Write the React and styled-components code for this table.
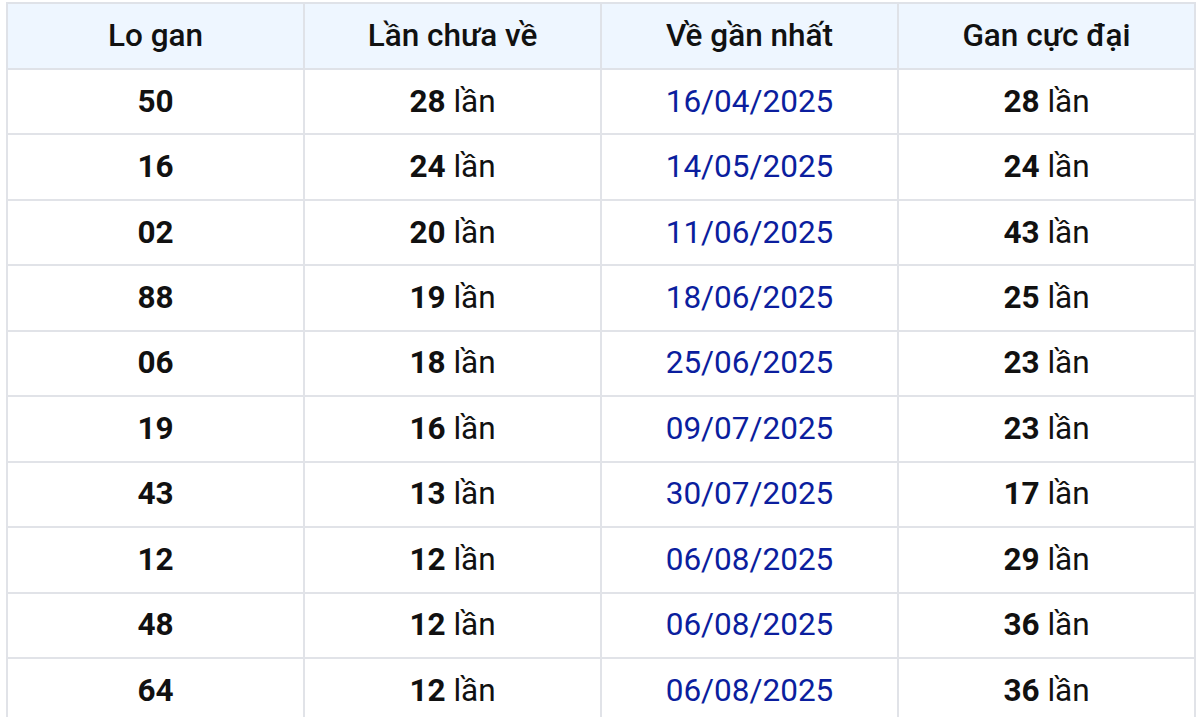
import styled, { createGlobalStyle } from "styled-components";

const GlobalStyle = createGlobalStyle`
  body {
    margin: 0;
    background: #fff;
    font-family: Roboto, "Liberation Sans", Arial, sans-serif;
  }
`;

const rows = [
  { lo: "50", chua: 28, date: "16/04/2025", max: 28 },
  { lo: "16", chua: 24, date: "14/05/2025", max: 24 },
  { lo: "02", chua: 20, date: "11/06/2025", max: 43 },
  { lo: "88", chua: 19, date: "18/06/2025", max: 25 },
  { lo: "06", chua: 18, date: "25/06/2025", max: 23 },
  { lo: "19", chua: 16, date: "09/07/2025", max: 23 },
  { lo: "43", chua: 13, date: "30/07/2025", max: 17 },
  { lo: "12", chua: 12, date: "06/08/2025", max: 29 },
  { lo: "48", chua: 12, date: "06/08/2025", max: 36 },
  { lo: "64", chua: 12, date: "06/08/2025", max: 36 },
];

const Wrapper = styled.div`
  padding: 2px 4px 0 6px;
`;

const Table = styled.table`
  width: 1190px;
  border-collapse: collapse;
  table-layout: fixed;
  color: #111;
`;

const HeadCell = styled.th`
  height: 64px;
  padding: 0;
  background: #eef6ff;
  border: 2px solid #dfe2e8;
  font-size: 31.5px;
  line-height: 36px;
  font-weight: 500;
  text-align: center;
`;

const Cell = styled.td`
  height: 63.44px;
  padding: 0;
  border: 2px solid #e1e3e8;
  font-size: 31.5px;
  line-height: 36px;
  text-align: center;
  color: ${(p) => (p.$date ? "#0b1e9e" : "#111")};
`;

const Num = styled.b`
  font-weight: 700;
`;

const Times = ({ n }) => (
  <>
    <Num>{n}</Num> lần
  </>
);

export default function App() {
  return (
    <Wrapper>
      <GlobalStyle />
      <Table>
        <thead>
          <tr>
            <HeadCell>Lo gan</HeadCell>
            <HeadCell>Lần chưa về</HeadCell>
            <HeadCell>Về gần nhất</HeadCell>
            <HeadCell>Gan cực đại</HeadCell>
          </tr>
        </thead>
        <tbody>
          {rows.map((r, i) => (
            <tr key={i}>
              <Cell>
                <Num>{r.lo}</Num>
              </Cell>
              <Cell>
                <Times n={r.chua} />
              </Cell>
              <Cell $date>{r.date}</Cell>
              <Cell>
                <Times n={r.max} />
              </Cell>
            </tr>
          ))}
        </tbody>
      </Table>
    </Wrapper>
  );
}
